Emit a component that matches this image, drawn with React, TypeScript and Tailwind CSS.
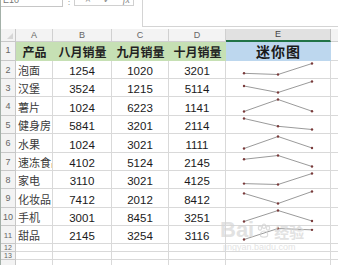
import React from "react";

const data: [string, number, number, number][] = [
  ["泡面", 1254, 1020, 3201],
  ["汉堡", 3524, 1215, 5114],
  ["薯片", 1024, 6223, 1141],
  ["健身房", 5841, 3201, 2114],
  ["水果", 1024, 3021, 1111],
  ["速冻食品", 4102, 5124, 2145],
  ["家电", 3110, 3021, 4125],
  ["化妆品", 7412, 2012, 8412],
  ["手机", 3001, 8451, 3251],
  ["甜品", 2145, 3254, 3116],
];

const heights = [18, 18, 19, 18, 19, 18, 18, 19, 18, 18];

const cjk = "font-['Noto_Sans_CJK_SC',sans-serif]";
const num = "font-['Liberation_Sans',Arial,sans-serif]";

function Spark({ vals, h }: { vals: number[]; h: number }) {
  const min = Math.min(...vals);
  const max = Math.max(...vals);
  const xs = [18, 52, 86];
  const pts = vals.map((v, i) => {
    const n = max === min ? 0.5 : (v - min) / (max - min);
    return [xs[i], 2.5 + (1 - n) * (h - 6)];
  });
  return (
    <svg width={105} height={h} className="block">
      <polyline
        points={pts.map((p) => p.join(",")).join(" ")}
        fill="none"
        stroke="#8f8f8f"
        strokeWidth={0.9}
      />
      {pts.map((p, i) => (
        <circle key={i} cx={p[0]} cy={p[1]} r={1.2} fill="#7a3a3a" />
      ))}
    </svg>
  );
}

function Paw() {
  return (
    <svg width={16} height={16} viewBox="0 0 16 16" className="block">
      <g fill="none" stroke="#cfcfcf" strokeWidth={1.2}>
        <ellipse cx={4} cy={5} rx={1.6} ry={2.2} />
        <ellipse cx={8} cy={3.2} rx={1.6} ry={2.2} />
        <ellipse cx={12} cy={5} rx={1.6} ry={2.2} />
        <path d="M4.5 13 C3.5 10 6 8 8 8 C10 8 12.5 10 11.5 13 C10 14.5 6 14.5 4.5 13 Z" />
      </g>
    </svg>
  );
}

export default function App() {
  return (
    <div className="relative flex w-[338px] h-[265px] overflow-hidden bg-white">
      <div className="w-[1px] shrink-0 bg-[#a3b0a8]" />
      <div className="flex flex-col flex-1 min-w-0">
        {/* formula bar */}
        <div className="flex h-[29px] shrink-0">
          <div className="w-[62px] h-[7px] border-b border-r border-[#c6c6c6] overflow-hidden">
            <div className={`${num} text-[9px] leading-[9px] text-[#777] -mt-[4px] pl-[2px]`}>E10</div>
          </div>
          <div className="w-[11px] h-[6px] overflow-hidden flex justify-center">
            <div className="text-[8px] leading-[8px] text-[#999] -mt-[3px]">⋮</div>
          </div>
          <div className="w-[60px] h-[6px] border-b border-l border-r border-[#d0d0d0] overflow-hidden flex gap-[12px] pl-[10px]">
            <span className={`${num} text-[10px] leading-[10px] text-[#888] -mt-[5px]`}>×</span>
            <span className={`${num} text-[10px] leading-[10px] text-[#888] -mt-[5px]`}>✓</span>
            <span className="font-['Liberation_Serif',serif] italic text-[10px] leading-[10px] text-[#888] -mt-[5px]">fx</span>
          </div>
          <div className="w-[8px]" />
          <div className="flex-1 h-[27px] border-l border-b border-[#d4d4d4]" />
        </div>
        {/* column headers */}
        <div className={`flex h-[13px] shrink-0 ${num} text-[9px] text-[#666]`}>
          <div className="w-[15px] border-r border-b border-[#c8c8c8] bg-[#f3f3f3] relative">
            <div className="absolute right-[2px] bottom-[2px] w-0 h-0 border-l-[6px] border-l-transparent border-b-[6px] border-b-[#d6d6d6]" />
          </div>
          {[
            ["A", 37],
            ["B", 59],
            ["C", 57],
            ["D", 57],
          ].map(([l, w]) => (
            <div
              key={l as string}
              style={{ width: w as number }}
              className="border-r border-b border-[#d0d0d0] bg-[#f3f3f3] flex items-center justify-center leading-none"
            >
              {l}
            </div>
          ))}
          <div className="w-[105px] border-r border-[#c0c0c0] border-b-2 border-b-[#217346] bg-[#e1e1e1] flex items-center justify-center leading-none text-[#444]">
            E
          </div>
          <div className="flex-1 border-b border-[#d0d0d0] bg-[#f3f3f3]" />
        </div>
        {/* row 1 */}
        <div className="flex h-[19px] shrink-0">
          <div className={`w-[15px] border-r border-b border-[#c8c8c8] bg-[#f3f3f3] flex items-center justify-center ${num} text-[9px] text-[#666]`}>1</div>
          <div className={`w-[37px] bg-[#c6e0b4] flex items-center justify-center ${cjk} font-bold text-[12px] text-[#222]`}>产品</div>
          <div className={`w-[59px] bg-[#c6e0b4] flex items-center justify-center ${cjk} font-bold text-[12px] text-[#222]`}>八月销量</div>
          <div className={`w-[57px] bg-[#c6e0b4] flex items-center justify-center ${cjk} font-bold text-[12px] text-[#222]`}>九月销量</div>
          <div className={`w-[57px] bg-[#c6e0b4] flex items-center justify-center ${cjk} font-bold text-[12px] text-[#222]`}>十月销量</div>
          <div className={`w-[105px] bg-[#bdd7ee] flex items-center justify-center ${cjk} font-bold text-[14px] text-[#1a1a1a] tracking-[1px]`}>迷你图</div>
          <div className="flex-1 border-b border-[#d9d9d9]" />
        </div>
        {/* data rows */}
        {data.map((r, i) => {
          const h = heights[i];
          return (
            <div key={i} className="flex shrink-0" style={{ height: h }}>
              <div className={`w-[15px] border-r border-b border-[#c8c8c8] bg-[#f3f3f3] flex items-center justify-center ${num} ${i === 9 ? "text-[8px]" : "text-[9px]"} text-[#666] pt-[2px]`}>
                {i + 2}
              </div>
              <div className={`w-[37px] border-r border-b border-[#d9d9d9] overflow-hidden whitespace-nowrap flex items-end pl-[2px] pb-[1px] ${cjk} text-[11px] leading-[14px] text-[#3a3a3a]`}>
                {r[0]}
              </div>
              {[r[1], r[2], r[3]].map((v, j) => (
                <div
                  key={j}
                  className={`${j === 0 ? "w-[59px]" : "w-[57px]"} border-r border-b border-[#d9d9d9] flex items-end justify-center ${num} text-[11.5px] leading-[14px] text-[#1a1a1a]`}
                >
                  {v}
                </div>
              ))}
              <div className="w-[105px] border-r border-b border-[#d9d9d9]">
                <Spark vals={[r[1], r[2], r[3]]} h={h - 1} />
              </div>
              <div className="flex-1 border-b border-[#d9d9d9]" />
            </div>
          );
        })}
        {[12, 13].map((n) => (
          <div key={n} className="flex h-[8px] shrink-0">
            <div className={`w-[15px] border-r border-b border-[#c8c8c8] bg-[#f3f3f3] flex items-center justify-center ${num} text-[7px] leading-none text-[#666]`}>
              {n}
            </div>
            <div className="w-[37px] border-r border-b border-[#d9d9d9]" />
            <div className="w-[59px] border-r border-b border-[#d9d9d9]" />
            <div className="w-[57px] border-r border-b border-[#d9d9d9]" />
            <div className="w-[57px] border-r border-b border-[#d9d9d9]" />
            <div className="w-[105px] border-r border-b border-[#d9d9d9]" />
            <div className="flex-1 border-b border-[#d9d9d9]" />
          </div>
        ))}
        <div className="flex flex-1">
          <div className="w-[15px] border-r border-[#c8c8c8] bg-[#f3f3f3]" />
          <div className="w-[37px] border-r border-[#d9d9d9]" />
          <div className="w-[59px] border-r border-[#d9d9d9]" />
          <div className="w-[57px] border-r border-[#d9d9d9]" />
          <div className="w-[57px] border-r border-[#d9d9d9]" />
          <div className="w-[105px] border-r border-[#d9d9d9]" />
        </div>
      </div>
      {/* watermark */}
      <div className="absolute left-[220px] top-[219px] flex items-end gap-[2px] opacity-70 pointer-events-none">
        <span className="font-['Liberation_Sans',sans-serif] font-bold text-[22px] leading-none text-[#d6d6d6]">Bai</span>
        <div className="mb-[2px]">
          <Paw />
        </div>
        <span className={`${cjk} font-bold text-[15px] leading-none text-[#d6d6d6] mb-[2px]`}>经验</span>
      </div>
      <div className="absolute left-[223px] top-[243px] font-['Liberation_Sans',sans-serif] text-[9px] leading-none text-[#d8d8d8] opacity-70 pointer-events-none">
        jingyan.baidu.com
      </div>
    </div>
  );
}
